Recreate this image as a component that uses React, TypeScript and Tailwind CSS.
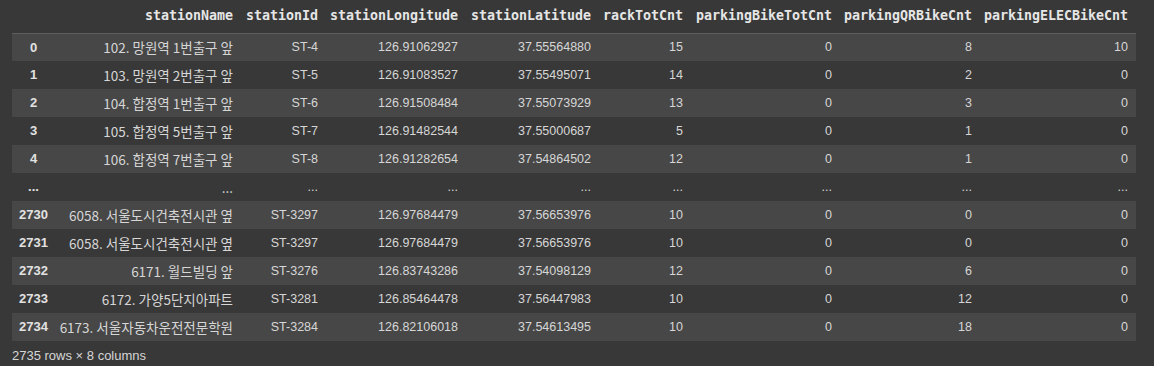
import React from "react";

const cols = [
  { name: "", w: "w-[43px]" },
  { name: "stationName", w: "w-[186px]" },
  { name: "stationId", w: "w-[85px]" },
  { name: "stationLongitude", w: "w-[140px]" },
  { name: "stationLatitude", w: "w-[133px]" },
  { name: "rackTotCnt", w: "w-[92px]" },
  { name: "parkingBikeTotCnt", w: "w-[149px]" },
  { name: "parkingQRBikeCnt", w: "w-[140px]" },
  { name: "parkingELECBikeCnt", w: "w-[156px]" },
];

const rows: string[][] = [
  ["0", "102. 망원역 1번출구 앞", "ST-4", "126.91062927", "37.55564880", "15", "0", "8", "10"],
  ["1", "103. 망원역 2번출구 앞", "ST-5", "126.91083527", "37.55495071", "14", "0", "2", "0"],
  ["2", "104. 합정역 1번출구 앞", "ST-6", "126.91508484", "37.55073929", "13", "0", "3", "0"],
  ["3", "105. 합정역 5번출구 앞", "ST-7", "126.91482544", "37.55000687", "5", "0", "1", "0"],
  ["4", "106. 합정역 7번출구 앞", "ST-8", "126.91282654", "37.54864502", "12", "0", "1", "0"],
  ["...", "...", "...", "...", "...", "...", "...", "...", "..."],
  ["2730", "6058. 서울도시건축전시관 옆", "ST-3297", "126.97684479", "37.56653976", "10", "0", "0", "0"],
  ["2731", "6058. 서울도시건축전시관 옆", "ST-3297", "126.97684479", "37.56653976", "10", "0", "0", "0"],
  ["2732", "6171. 월드빌딩 앞", "ST-3276", "126.83743286", "37.54098129", "12", "0", "6", "0"],
  ["2733", "6172. 가양5단지아파트", "ST-3281", "126.85464478", "37.56447983", "10", "0", "12", "0"],
  ["2734", "6173. 서울자동차운전전문학원", "ST-3284", "126.82106018", "37.54613495", "10", "0", "18", "0"],
];

export default function App() {
  return (
    <div className="w-[1154px] h-[366px] bg-[#383838] overflow-hidden">
      <div className="pl-[12px]">
        <table className="table-fixed border-collapse w-[1124px]">
          <colgroup>
            {cols.map((c, i) => (
              <col key={i} className={c.w} />
            ))}
          </colgroup>
          <thead>
            <tr className="h-[33px] border-b border-[#5e5e5e]">
              {cols.map((c, i) => (
                <th
                  key={i}
                  className="p-0 pr-[8px] text-right align-middle text-[13.3px] font-bold text-[#e6e6e6] whitespace-nowrap [font-family:'DejaVu_Sans_Mono',monospace]"
                >
                  {c.name}
                </th>
              ))}
            </tr>
          </thead>
          <tbody>
            {rows.map((r, ri) => (
              <tr key={ri} className={`h-[28px] ${ri % 2 === 0 ? "bg-[#474747]" : "bg-[#383838]"}`}>
                {r.map((v, ci) =>
                  ci === 0 ? (
                    <th
                      key={ci}
                      className="p-0 text-center align-middle text-[13px] font-bold text-[#e2e2e2] whitespace-nowrap [font-family:'Liberation_Sans','Noto_Sans_CJK_KR',sans-serif]"
                    >
                      {v}
                    </th>
                  ) : ci === 1 ? (
                    <td
                      key={ci}
                      className="p-0 pr-[8px] text-right align-middle text-[13.5px] text-[#d6d6d6] whitespace-nowrap [font-family:'Noto_Sans_CJK_KR',sans-serif]"
                    >
                      {v}
                    </td>
                  ) : (
                    <td
                      key={ci}
                      className="p-0 pr-[8px] text-right align-middle text-[12.5px] text-[#d6d6d6] whitespace-nowrap [font-family:'Liberation_Sans','Noto_Sans_CJK_KR',sans-serif]"
                    >
                      {v}
                    </td>
                  )
                )}
              </tr>
            ))}
          </tbody>
        </table>
        <div className="pt-[5px] text-[13px] text-[#d6d6d6] [font-family:'Liberation_Sans',sans-serif]">
          2735 rows × 8 columns
        </div>
      </div>
    </div>
  );
}
